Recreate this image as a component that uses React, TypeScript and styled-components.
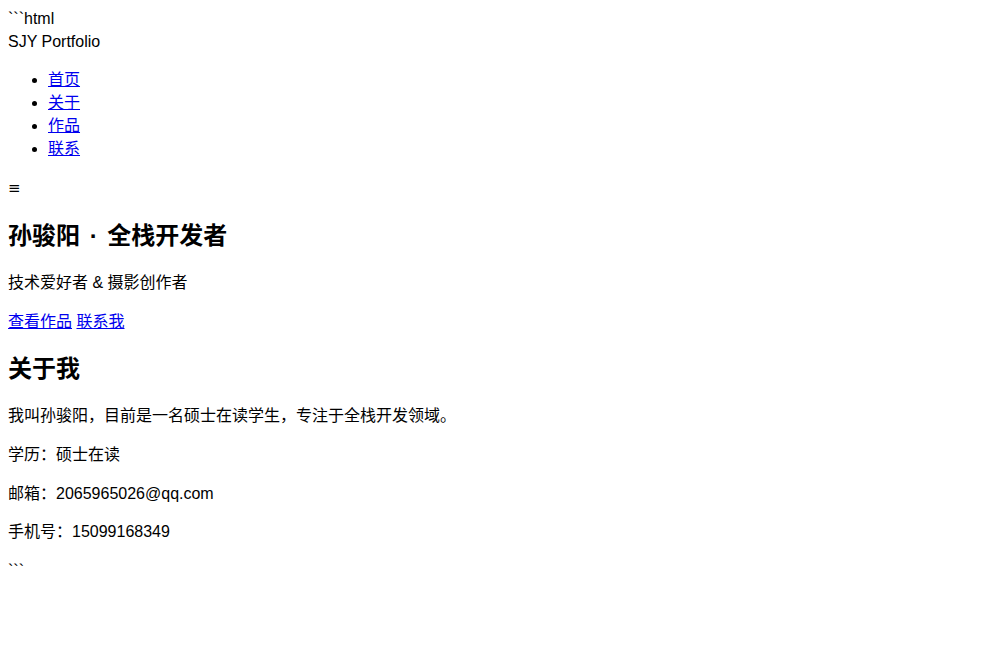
import React from "react";
import styled, { createGlobalStyle } from "styled-components";

const GlobalStyle = createGlobalStyle`
  body {
    margin: 8px;
    background: #ffffff;
    color: #000000;
    font-family: "Liberation Sans", "Noto Sans CJK SC", sans-serif;
    font-size: 16px;
    line-height: 22.7px;
  }
`;

const Fence = styled.div`
  white-space: pre;
`;

const Brand = styled.div``;

const NavList = styled.ul`
  margin: 16px 0;
  padding-left: 40px;
  list-style: disc;
`;

const NavLink = styled.a`
  color: #0000ee;
  text-decoration: underline;
`;

const MenuToggle = styled.div`
  font-family: "DejaVu Sans", sans-serif;
  font-size: 15px;
  line-height: 24px;
`;

const Heading = styled.h2`
  margin: 19.92px 0;
  font-size: 24px;
  line-height: 32px;
  font-weight: bold;
`;

const Dot = styled.span`
  padding: 0 3px;
`;

const Text = styled.p`
  margin: 16px 0;
`;

const navItems = [
  { href: "#home", label: "首页" },
  { href: "#about", label: "关于" },
  { href: "#works", label: "作品" },
  { href: "#contact", label: "联系" },
];

const aboutLines = [
  "我叫孙骏阳，目前是一名硕士在读学生，专注于全栈开发领域。",
  "学历：硕士在读",
  "邮箱：2065965026@qq.com",
  "手机号：15099168349",
];

export default function App() {
  return (
    <>
      <GlobalStyle />
      <Fence>```html</Fence>
      <header>
        <Brand>SJY Portfolio</Brand>
        <nav>
          <NavList>
            {navItems.map((item) => (
              <li key={item.href}>
                <NavLink href={item.href}>{item.label}</NavLink>
              </li>
            ))}
          </NavList>
        </nav>
        <MenuToggle>≡</MenuToggle>
      </header>
      <section id="home">
        <Heading>
          孙骏阳 <Dot>·</Dot> 全栈开发者
        </Heading>
        <Text>技术爱好者 &amp; 摄影创作者</Text>
        <Text>
          <NavLink href="#works">查看作品</NavLink>{" "}
          <NavLink href="#contact">联系我</NavLink>
        </Text>
      </section>
      <section id="about">
        <Heading>关于我</Heading>
        {aboutLines.map((line) => (
          <Text key={line}>{line}</Text>
        ))}
      </section>
      <Fence>```</Fence>
    </>
  );
}
